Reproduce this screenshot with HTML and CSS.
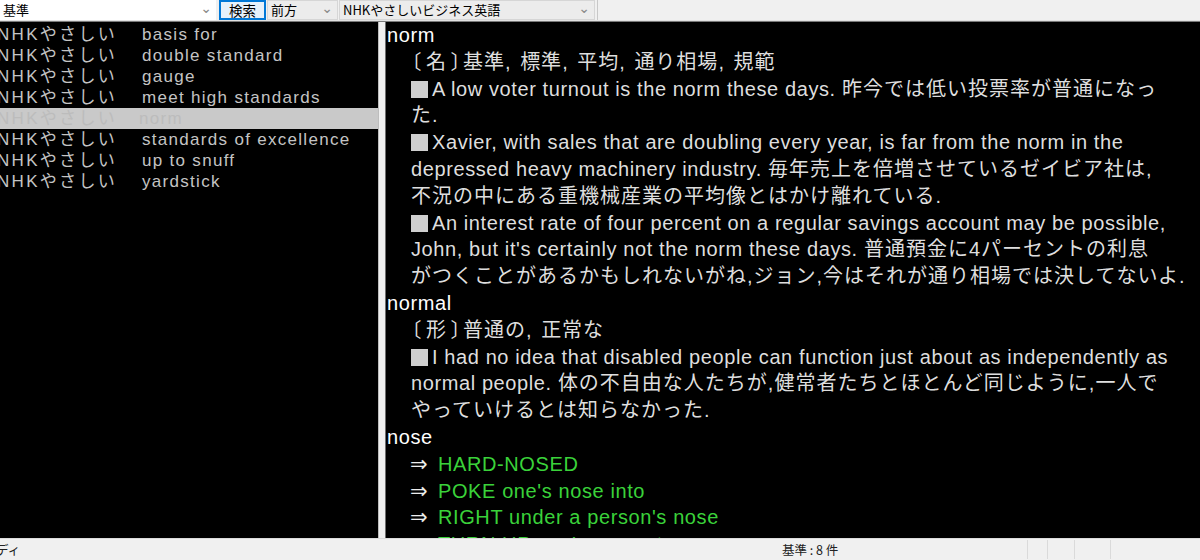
FILE: index.html
```html
<!DOCTYPE html>
<html lang="ja">
<head>
<meta charset="utf-8">
<title>辞書</title>
<link rel="stylesheet" href="styles.css">
</head>
<body>
<div class="app">
  <div class="toolbar">
    <div class="field word">
      <span class="field-text">基準</span>
      <span class="arrow">&#8964;</span>
    </div>
    <div class="btn">検索</div>
    <div class="field combo mode">
      <span class="field-text">前方</span>
      <span class="arrow">&#8964;</span>
    </div>
    <div class="field combo dict">
      <span class="field-text">NHKやさしいビジネス英語</span>
      <span class="arrow">&#8964;</span>
    </div>
    <div class="tool-rest"></div>
  </div>
  <div class="main">
    <div class="list">
      <div class="row"><span class="src">NHKやさしい</span><span class="term">basis for</span></div>
      <div class="row"><span class="src">NHKやさしい</span><span class="term">double standard</span></div>
      <div class="row"><span class="src">NHKやさしい</span><span class="term">gauge</span></div>
      <div class="row"><span class="src">NHKやさしい</span><span class="term">meet high standards</span></div>
      <div class="row selected"><span class="src">NHKやさしい</span><span class="term">norm</span></div>
      <div class="row"><span class="src">NHKやさしい</span><span class="term">standards of excellence</span></div>
      <div class="row"><span class="src">NHKやさしい</span><span class="term">up to snuff</span></div>
      <div class="row"><span class="src">NHKやさしい</span><span class="term">yardstick</span></div>
    </div>
    <div class="splitter"></div>
    <div class="content">
      <div class="ln head">norm</div>
      <div class="ln"><span class="ja"><span class="pos">〔名〕</span>基準<span class="cm">, </span>標準<span class="cm">, </span>平均<span class="cm">, </span>通り相場<span class="cm">, </span>規範</span></div>
      <div class="ln"><span class="sq"></span>A low voter turnout is the norm these days. <span class="ja">昨今では低い投票率が普通になっ</span></div>
      <div class="ln"><span class="ja">た.</span></div>
      <div class="ln"><span class="sq"></span>Xavier, with sales that are doubling every year, is far from the norm in the</div>
      <div class="ln">depressed heavy machinery industry. <span class="ja">毎年売上を倍増させているゼイビア社は,</span></div>
      <div class="ln"><span class="ja">不況の中にある重機械産業の平均像とはかけ離れている.</span></div>
      <div class="ln"><span class="sq"></span>An interest rate of four percent on a regular savings account may be possible,</div>
      <div class="ln">John, but it's certainly not the norm these days. <span class="ja">普通預金に4パーセントの利息</span></div>
      <div class="ln"><span class="ja">がつくことがあるかもしれないがね,ジョン,今はそれが通り相場では決してないよ.</span></div>
      <div class="ln head">normal</div>
      <div class="ln"><span class="ja"><span class="pos">〔形〕</span>普通の<span class="cm">, </span>正常な</span></div>
      <div class="ln"><span class="sq"></span>I had no idea that disabled people can function just about as independently as</div>
      <div class="ln">normal people. <span class="ja">体の不自由な人たちが,健常者たちとほとんど同じように,一人で</span></div>
      <div class="ln"><span class="ja">やっていけるとは知らなかった.</span></div>
      <div class="ln head">nose</div>
      <div class="ln"><span class="ref">⇒</span><span class="link">HARD-NOSED</span></div>
      <div class="ln"><span class="ref">⇒</span><span class="link">POKE one's nose into</span></div>
      <div class="ln"><span class="ref">⇒</span><span class="link">RIGHT under a person's nose</span></div>
      <div class="ln"><span class="ref">⇒</span><span class="link">TURN UP one's nose at</span></div>
    </div>
  </div>
  <div class="status">
    <div class="st-left">ディ</div>
    <div class="st-mid">基準 : 8 件</div>
    <div class="st-cell c1"></div>
    <div class="st-cell c2"></div>
    <div class="st-cell c3"></div>
    <div class="st-cell c4"></div>
  </div>
</div>
</body>
</html>
```

FILE: styles.css
```css
html, body {
  margin: 0;
  padding: 0;
}
body {
  width: 1200px;
  height: 560px;
  overflow: hidden;
  background: #f0f0f0;
  font-family: "Liberation Sans", "Noto Sans CJK JP", sans-serif;
}
.app {
  display: flex;
  flex-direction: column;
  height: 560px;
}
.toolbar {
  height: 20px;
  display: flex;
  align-items: stretch;
  background: #f0f0f0;
  font-family: "Noto Sans CJK JP", sans-serif;
  font-size: 13px;
  color: #000;
  border-bottom: 1px solid #e2e2e2;
}
.field {
  display: flex;
  align-items: center;
  justify-content: space-between;
  box-sizing: border-box;
  height: 20px;
  background: #fff;
  padding: 0 4px 0 3px;
}
.field-text {
  line-height: 18px;
  white-space: nowrap;
}
.arrow {
  color: #8a8a8a;
  font-size: 14px;
  line-height: 10px;
  height: 14px;
  font-family: "DejaVu Sans", sans-serif;
}
.word {
  width: 216px;
}
.btn {
  box-sizing: border-box;
  width: 47px;
  height: 20px;
  margin-left: 3px;
  background: #e5f1fb;
  border: 2px solid #0078d7;
  display: flex;
  align-items: center;
  justify-content: center;
  line-height: 16px;
  font-size: 13.5px;
}
.combo {
  background: #ececec;
  border: 1px solid #d6d6d6;
}
.mode {
  width: 71px;
  margin-left: 1px;
}
.dict {
  width: 256px;
  margin-left: 1px;
}
.tool-rest {
  flex: 1;
  border-left: 1px solid #c8c8c8;
  margin-left: 2px;
}
.main {
  flex: 1;
  display: flex;
  min-height: 0;
  border-top: 1px solid #7a7a7a;
  border-bottom: 1px solid #dcdcdc;
  background: #000;
}
.list {
  width: 378px;
  background: #000;
  overflow: hidden;
  padding-top: 2px;
  font-size: 17px;
  letter-spacing: 1.2px;
  color: #c4c4c4;
}
.row {
  height: 21px;
  line-height: 21px;
  display: flex;
  white-space: nowrap;
  margin-left: -3px;
}
.row .src {
  width: 145px;
  flex: none;
  letter-spacing: 2.3px;
}
.row .term {
  letter-spacing: 1.3px;
}
.row.selected {
  background: #c9c9c9;
  color: #bcbcbc;
  margin-left: 0;
}
.row.selected .src {
  width: 142px;
  margin-left: -3px;
}
.splitter {
  width: 6px;
  background: #f0f0f0;
  border-left: 1px solid #bdbdbd;
  border-right: 1px solid #6e6e6e;
}
.content {
  flex: 1;
  min-width: 0;
  overflow: hidden;
  padding-left: 1px;
  font-size: 20px;
  letter-spacing: 0.6px;
  color: #dedede;
}
.ln {
  height: 26.8px;
  line-height: 26.8px;
  white-space: nowrap;
  padding-left: 24px;
}
.ln.head {
  padding-left: 0;
  color: #fff;
  letter-spacing: 0.6px;
}
.ja {
  letter-spacing: 1px;
}
.pos {
  font-feature-settings: "palt";
  letter-spacing: 5px;
  margin-right: -3px;
}
.cm {
  letter-spacing: 2px;
}
.sq {
  display: inline-block;
  width: 17px;
  height: 17px;
  background: #cfcfcf;
  margin-right: 4px;
  margin-left: 0;
  vertical-align: -2px;
}
.ref {
  display: inline-block;
  width: 28px;
  margin-left: -1px;
  color: #ececec;
  font-family: "DejaVu Sans", sans-serif;
  font-size: 21px;
}
.link {
  color: #3ad23a;
}
.status {
  height: 21px;
  display: flex;
  align-items: center;
  background: #f0f0f0;
  font-family: "Noto Sans CJK JP", sans-serif;
  font-size: 12.5px;
  color: #222;
}
.st-left {
  width: 786px;
  margin-left: -4px;
  white-space: nowrap;
  overflow: hidden;
}
.st-mid {
  width: 245px;
  white-space: nowrap;
}
.st-cell {
  height: 19px;
  border-left: 1px solid #dadada;
}
.c1 { width: 19px; }
.c2 { width: 26px; }
.c3 { width: 35px; }
.c4 { flex: 1; }
```
